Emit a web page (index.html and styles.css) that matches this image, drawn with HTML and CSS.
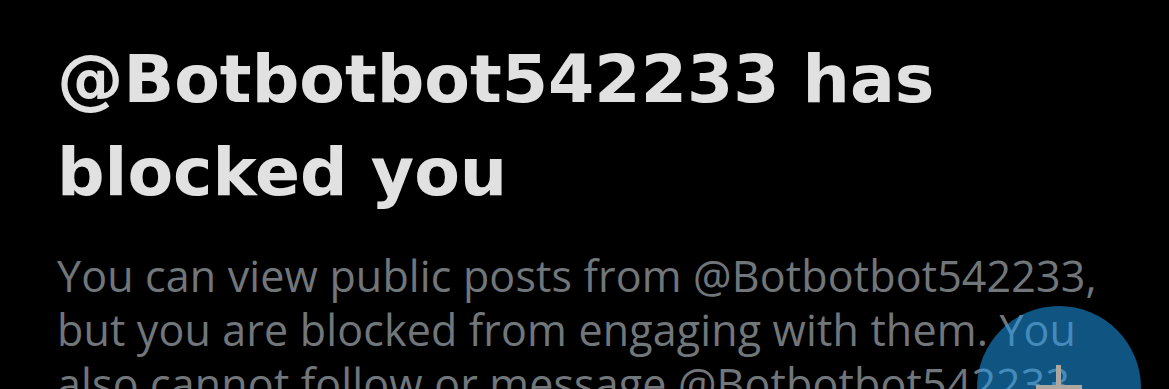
FILE: index.html
```html
<!DOCTYPE html>
<html lang="en">
<head>
<meta charset="utf-8">
<link rel="stylesheet" href="styles.css">
</head>
<body>
<main class="blocked">
  <h1 class="blocked-title">@Botbotbot542233 has blocked you</h1>
  <p class="blocked-text">You can view public posts from @Botbotbot542233, but you are blocked from engaging with them. You also cannot follow or message @Botbotbot542233.</p>
</main>
<button class="fab" aria-label="Compose"><span class="fab-plus"></span></button>
</body>
</html>
```
FILE: styles.css
```css
html, body {
  margin: 0;
  padding: 0;
  background: #000;
  height: 100%;
  overflow: hidden;
}
.blocked {
  padding: 33px 0 0 57px;
  width: 1060px;
}
.blocked-title {
  margin: 0;
  font-family: "DejaVu Sans", sans-serif;
  font-weight: 700;
  font-size: 66.5px;
  line-height: 93px;
  color: #e1e1e1;
}
.blocked-text {
  margin: 30px 0 0;
  font-family: "Open Sans", sans-serif;
  font-weight: 400;
  font-size: 43px;
  line-height: 54px;
  letter-spacing: 0.15px;
  color: #71767b;
}
.fab {
  position: absolute;
  left: 977px;
  top: 306px;
  width: 164px;
  height: 164px;
  border: 0;
  padding: 0;
  border-radius: 50%;
  background: rgba(29, 155, 240, 0.54);
}
.fab-plus {
  position: absolute;
  left: 59px;
  top: 59px;
  width: 46px;
  height: 46px;
}
.fab-plus::before,
.fab-plus::after {
  content: "";
  position: absolute;
  background: #aca79f;
}
.fab-plus::before {
  left: 20px;
  top: 0;
  width: 5px;
  height: 46px;
}
.fab-plus::after {
  left: 0;
  top: 20px;
  width: 46px;
  height: 5px;
}
```
